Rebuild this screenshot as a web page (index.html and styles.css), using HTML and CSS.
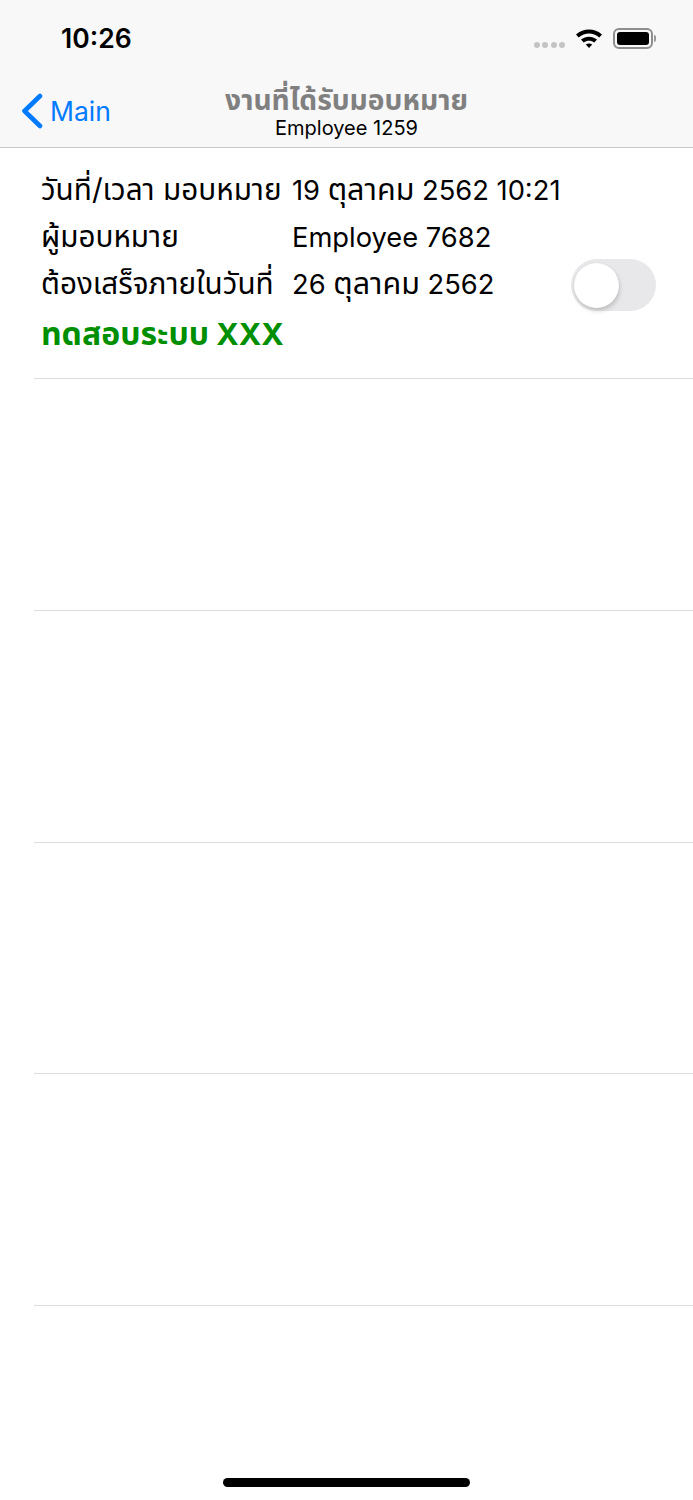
FILE: index.html
```html
<!DOCTYPE html>
<html lang="th">
<head>
  <meta charset="UTF-8" />
  <meta name="viewport" content="width=device-width, initial-scale=1.0" />
  <title>งานที่ได้รับมอบหมาย</title>
  <link rel="stylesheet" href="styles.css">
</head>

<body>
  <header class="top">
    <div class="status">
      <span class="clock">10:26</span>
      <div class="status-icons">
        <div class="dots"><i></i><i></i><i></i><i></i></div>
        <svg class="wifi" width="28" height="22" viewBox="0 0 28 22">
          <path d="M1 7.5C8.500 0.800 19.500 0.800 27 7.500L24.300 10.400C18.200 5.200 9.800 5.200 3.700 10.400Z" fill="#000"/>
          <path d="M6 12.600C10.800 8.700 17.200 8.700 22 12.600L19.300 15.500C16.100 13 11.900 13 8.700 15.500Z" fill="#000"/>
          <path d="M10.800 17.500C12.700 16.200 15.300 16.200 17.200 17.500L14 21Z" fill="#000"/>
        </svg>
        <div class="battery"><div class="battery-fill"></div></div>
        <div class="battery-cap"></div>
      </div>
    </div>
    <nav class="nav">
      <a class="back">
        <svg width="24" height="36" viewBox="0 0 24 36">
          <path d="M20 3L4.500 18L20 33" fill="none" stroke="#007aff" stroke-width="4.600" stroke-linecap="round" stroke-linejoin="round"/>
        </svg>
        <span>Main</span>
      </a>
      <div class="title">
        <div class="title-main">งานที่ได้รับมอบหมาย</div>
        <div class="title-sub">Employee 1259</div>
      </div>
    </nav>
  </header>

  <main class="list">
    <section class="cell first">
      <div class="info">
        <div class="line"><span class="label">วันที่/เวลา มอบหมาย</span><span class="value">19 <span class="th">ตุลาคม</span> 2562 10:21</span></div>
        <div class="line"><span class="label">ผู้มอบหมาย</span><span class="value">Employee 7682</span></div>
        <div class="line"><span class="label">ต้องเสร็จภายในวันที่</span><span class="value">26 <span class="th">ตุลาคม</span> 2562</span></div>
        <div class="task"><span class="th">ทดสอบระบบ</span> XXX</div>
      </div>
      <div class="switch"><div class="knob"></div></div>
    </section>
    <section class="cell"></section>
    <section class="cell"></section>
    <section class="cell"></section>
    <section class="cell"></section>
  </main>

  <div class="home-bar"></div>
</body>
</html>
```

FILE: styles.css
```css
* {
  box-sizing: border-box;
}

body {
  margin: 0;
  height: 1500px;
  overflow: hidden;
  background-color: white;
  color: black;
  font-family: Inter, Roboto, "Noto Sans", "Noto Sans Thai", sans-serif;
  display: flex;
  flex-direction: column;
  align-items: stretch;
}

.top {
  height: 148px;
  background-color: #f8f8f8;
  border-bottom: 1px solid #c9c9cb;
}

.status {
  height: 76px;
  display: flex;
  justify-content: space-between;
  align-items: center;
  padding: 0 37px 0 61px;
}

.clock {
  font-size: 26.500px;
  font-weight: 600;
}

.status-icons {
  display: flex;
  align-items: center;
}

.dots {
  display: flex;
  gap: 2.400px;
  margin: 14px 10px 0 0;
}

.dots i {
  width: 6px;
  height: 6px;
  border-radius: 50%;
  background-color: #c4c4c4;
}

.wifi {
  margin-right: 10px;
}

.battery {
  width: 40px;
  height: 21px;
  padding: 2px;
  border: 2px solid #8e8e8e;
  border-radius: 6px;
}

.battery-fill {
  height: 100%;
  background-color: black;
  border-radius: 3px;
}

.battery-cap {
  width: 2px;
  height: 7px;
  margin-left: 1px;
  background-color: #9a9a9a;
  border-radius: 0 2px 2px 0;
}

.nav {
  height: 71px;
  display: grid;
  grid-template-columns: 1fr auto 1fr;
  align-items: center;
}

.back {
  display: flex;
  align-items: center;
  gap: 6px;
  margin: 0 0 1px 20px;
  color: #007aff;
  font-size: 26.500px;
}

.title {
  text-align: center;
}

.title-main {
  color: #808080;
  font-size: 28.200px;
  font-weight: 700;
  line-height: 32px;
}

.title-sub {
  font-size: 20px;
  line-height: 24px;
}

.list {
  flex: 1;
}

.cell {
  height: 231.750px;
  margin-left: 34px;
  border-bottom: 1px solid #dcdcde;
}

.cell.first {
  height: 231px;
  padding: 19px 37px 0 7px;
  display: flex;
  justify-content: space-between;
  align-items: flex-start;
}

.info {
  font-size: 29.700px;
}

.line {
  display: flex;
  height: 47px;
  align-items: center;
}

.label {
  flex: none;
  width: 251px;
}

.value {
  font-size: 27.300px;
}

.value .th {
  font-size: 30.500px;
}

.task {
  margin-top: 3px;
  color: #008f00;
  font-weight: 700;
  font-size: 30.500px;
}

.task .th {
  font-size: 32px;
}

.switch {
  width: 85px;
  height: 52px;
  margin-top: 92px;
  padding: 3.500px 3px;
  background-color: #e8e8ea;
  border-radius: 26px;
}

.knob {
  width: 45px;
  height: 45px;
  background-color: white;
  border-radius: 50%;
  box-shadow: 1px 3px 4px rgba(0, 0, 0, 0.16), 0 0 2px rgba(0, 0, 0, 0.08);
}

.home-bar {
  position: absolute;
  left: 223px;
  top: 1478px;
  width: 247px;
  height: 9px;
  background-color: black;
  border-radius: 5px;
}
```
